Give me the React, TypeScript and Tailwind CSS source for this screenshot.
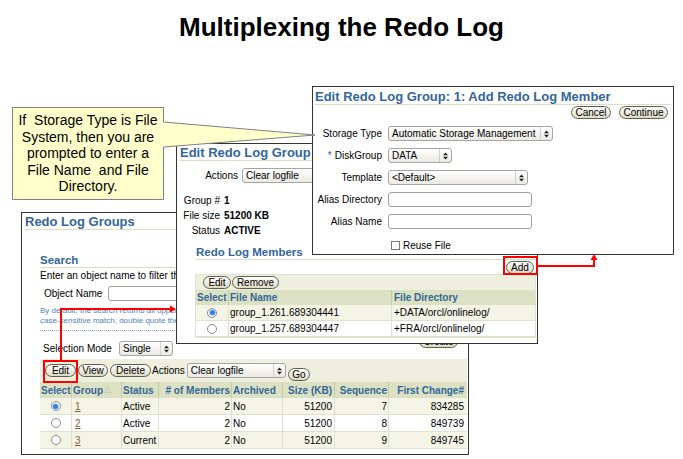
import type { ReactNode } from 'react';

const Btn = ({ children, className = '' }: { children: ReactNode; className?: string }) => (
    <span
        className={`inline-flex h-[13px] items-center justify-center rounded-[7px] border border-[#5e5e4e] bg-linear-to-b from-white to-[#dcd9c3] text-[10px] leading-none text-black ${className}`}
    >
        {children}
    </span>
);

const Sel = ({ children, className = '' }: { children: ReactNode; className?: string }) => (
    <span
        className={`inline-flex h-[15px] items-center rounded-[3px] border border-[#a5a5a5] bg-linear-to-b from-white to-[#eae9e2] text-[10px] leading-none ${className}`}
    >
        <span className="flex-1 overflow-hidden whitespace-nowrap pl-[3px]">{children}</span>
        <span className="flex h-full w-[12px] items-center justify-center border-l border-[#d0d0d0]">
            <svg width="5" height="8" viewBox="0 0 5 8">
                <path d="M0 3.2L2.5 0.5L5 3.2ZM0 4.8L2.5 7.5L5 4.8Z" fill="#222" />
            </svg>
        </span>
    </span>
);

const Field = ({ className = '' }: { className?: string }) => (
    <span className={`inline-block h-[15px] rounded-[3px] border border-[#a0a0a0] bg-white ${className}`} />
);

const Radio = ({ on }: { on?: boolean }) => (
    <span className="inline-flex h-[10px] w-[10px] items-center justify-center rounded-full border border-[#8a8a8a] bg-white">
        {on && <span className="h-[5px] w-[5px] rounded-full bg-[#3d7fd6] shadow-[0_0_0_1px_#b9d4f2]" />}
    </span>
);

const groups = [
    { g: '1', s: 'Active', seq: '7', fc: '834285', on: true },
    { g: '2', s: 'Active', seq: '8', fc: '849739' },
    { g: '3', s: 'Current', seq: '9', fc: '849745' },
];

const cols = 'grid grid-cols-[32px_50px_37px_73px_51px_52px_54px_77px]';

// the part of this window that lies under "Edit Redo Log Group" is hidden
const GroupsWindow = () => (
    <div className="absolute left-[21px] top-[212px] h-[243px] w-[448px] overflow-hidden border border-[#333] bg-white">
        <div className="whitespace-nowrap pl-[3px] pt-px text-[13px] font-bold leading-[15px] text-[#336699]">
            Redo Log Groups
        </div>
        <div className="mx-[3px] h-px bg-[#dedcc4]" />
        <div className="pl-[18px] pr-px text-[10px]">
            <div className="mt-[24px] text-[11.5px] font-bold leading-[13px] text-[#336699]">Search</div>
            <div className="h-px bg-[#dedcc4]" />
            <div className="mt-[2px] whitespace-nowrap leading-[12px]">Enter an object name to filter the</div>
            <div className="mt-[4px] flex items-center">
                <span className="w-[68px] pl-[4px]">Object Name</span>
                <Field className="w-[200px]" />
            </div>
            <div className="mt-[5px] whitespace-nowrap text-[8px] leading-[10px] text-[#4f7fc0]">
                By default, the search returns all upperc
                <br />
                case-sensitive match, double quote the s
            </div>
            <div className="mt-[4px] border-t border-dotted border-[#8aa6cc]" />
            <div className="flex items-start justify-between">
                <div className="mt-[10px] flex items-center">
                    <span className="w-[79px] pl-[3px]">Selection Mode</span>
                    <Sel className="w-[54px]">Single</Sel>
                </div>
                <Btn className="mr-[9px] mt-[4px] w-[39px]">Create</Btn>
            </div>
            <div className="mt-[3px] flex h-[23px] items-center bg-[#efefdf] pl-[5px]">
                <Btn className="w-[31px]">Edit</Btn>
                <Btn className="ml-[2px] w-[30px]">View</Btn>
                <Btn className="ml-[2px] w-[41px]">Delete</Btn>
                <span className="ml-px">Actions</span>
                <Sel className="ml-[2px] w-[99px]">Clear logfile</Sel>
                <Btn className="ml-[2px] mt-[8px] w-[22px]">Go</Btn>
            </div>
            <div className={`${cols} h-[16px] bg-[#dce1c3] font-bold text-[#336699]`}>
                <span className="flex items-center border-r border-[#c4c9a6] pl-px">Select</span>
                <span className="flex items-center border-r border-[#c4c9a6] pl-px">
                    Group<span className="ml-px text-[9px] font-normal text-[#b8b8a8]">△</span>
                </span>
                <span className="flex items-center border-r border-[#c4c9a6] pl-px">Status</span>
                <span className="flex items-center justify-end border-r border-[#c4c9a6] pr-px"># of Members</span>
                <span className="flex items-center border-r border-[#c4c9a6] pl-px">Archived</span>
                <span className="flex items-center justify-end border-r border-[#c4c9a6] pr-[2px]">Size (KB)</span>
                <span className="flex items-center justify-end border-r border-[#c4c9a6] pr-px">Sequence</span>
                <span className="flex items-center justify-end pr-[2px]">First Change#</span>
            </div>
            {groups.map((r, i) => (
                <div
                    key={r.g}
                    className={`${cols} h-[17px] border-b border-[#e2e2cc] ${i % 2 === 0 ? 'bg-[#f4f5e6]' : 'bg-white'}`}
                >
                    <span className="flex items-center justify-center border-r border-[#e2e2cc]">
                        <Radio on={r.on} />
                    </span>
                    <span className="flex items-center border-r border-[#e2e2cc] pl-[3px] text-[#8b5a2b] underline">
                        {r.g}
                    </span>
                    <span className="flex items-center border-r border-[#e2e2cc] pl-px">{r.s}</span>
                    <span className="flex items-center justify-end border-r border-[#e2e2cc] pr-px">2</span>
                    <span className="flex items-center border-r border-[#e2e2cc] pl-px">No</span>
                    <span className="flex items-center justify-end border-r border-[#e2e2cc] pr-[2px]">51200</span>
                    <span className="flex items-center justify-end border-r border-[#e2e2cc] pr-px">{r.seq}</span>
                    <span className="flex items-center justify-end pr-[2px]">{r.fc}</span>
                </div>
            ))}
        </div>
    </div>
);

const mcols = 'grid grid-cols-[33px_163px_1fr]';

const EditGroupWindow = () => (
    <div className="absolute left-[176px] top-[143px] h-[201px] w-[362px] overflow-hidden border border-[#333] bg-white text-[10px]">
        <div className="whitespace-nowrap pl-[3px] pt-px text-[13px] font-bold leading-[15px] text-[#336699]">
            Edit Redo Log Group
        </div>
        <div className="mx-[3px] h-px bg-[#dedcc4]" />
        <div className="mt-[7px] flex items-center">
            <span className="w-[61px] text-right">Actions</span>
            <Sel className="ml-[4px] w-[120px]">Clear logfile</Sel>
        </div>
        <div className="mt-[10px] grid grid-cols-[43px_auto] gap-x-[4px] leading-[15px]">
            <span className="text-right">Group #</span>
            <span className="font-bold">1</span>
            <span className="text-right">File size</span>
            <span className="font-bold">51200 KB</span>
            <span className="text-right">Status</span>
            <span className="font-bold">ACTIVE</span>
        </div>
        <div className="pl-[18px] pr-px">
            <div className="mt-[7px] pl-px text-[11.5px] font-bold leading-[14px] text-[#336699]">Redo Log Members</div>
            <div className="h-px bg-[#dedcc4]" />
            <div className="mt-px flex justify-end pr-[2px]">
                <Btn className="w-[28px]">Add</Btn>
            </div>
            <div className="border border-[#e2e2cc]">
                <div className="flex h-[15px] items-center bg-[#efefdf] pl-[7px]">
                    <Btn className="w-[28px]">Edit</Btn>
                    <Btn className="ml-px w-[47px]">Remove</Btn>
                </div>
                <div className={`${mcols} h-[15px] bg-[#dce1c3] font-bold text-[#336699]`}>
                    <span className="flex items-center border-r border-[#c4c9a6] pl-px">Select</span>
                    <span className="flex items-center border-r border-[#c4c9a6] pl-px">File Name</span>
                    <span className="flex items-center pl-[2px]">File Directory</span>
                </div>
                {[
                    ['group_1.261.689304441', '+DATA/orcl/onlinelog/', true],
                    ['group_1.257.689304447', '+FRA/orcl/onlinelog/', false],
                ].map(([f, d, on], i) => (
                    <div
                        key={f as string}
                        className={`${mcols} h-[16px] border-b border-[#e2e2cc] ${i === 0 ? 'bg-[#f4f5e6]' : 'bg-white'}`}
                    >
                        <span className="flex items-center justify-center border-r border-[#e2e2cc]">
                            <Radio on={on as boolean} />
                        </span>
                        <span className="flex items-center border-r border-[#e2e2cc] pl-px">{f}</span>
                        <span className="flex items-center pl-[2px]">{d}</span>
                    </div>
                ))}
            </div>
        </div>
    </div>
);

const Row = ({ label, children }: { label: ReactNode; children: ReactNode }) => (
    <div className="flex h-[15px] items-center">
        <span className="w-[69px] whitespace-nowrap text-right">{label}</span>
        <span className="ml-[6px] flex">{children}</span>
    </div>
);

const AddMemberWindow = () => (
    <div className="absolute left-[312px] top-[86px] h-[169px] w-[362px] overflow-hidden border border-[#333] bg-white text-[10px]">
        <div className="whitespace-nowrap pl-[2px] pt-[2px] text-[13px] font-bold leading-[15px] text-[#336699]">
            Edit Redo Log Group: 1: Add Redo Log Member
        </div>
        <div className="mx-[2px] h-px bg-[#dedcc4]" />
        <div className="mt-px flex justify-end gap-[8px] pr-[5px]">
            <Btn className="w-[40px]">Cancel</Btn>
            <Btn className="w-[49px]">Continue</Btn>
        </div>
        <div className="mt-[7px] flex flex-col gap-[7px]">
            <Row label="Storage Type">
                <Sel className="w-[165px]">Automatic Storage Management</Sel>
            </Row>
            <Row
                label={
                    <>
                        <span className="mr-[3px] text-[#336699]">*</span>DiskGroup
                    </>
                }
            >
                <Sel className="w-[64px]">DATA</Sel>
            </Row>
            <Row label="Template">
                <Sel className="w-[140px]">&lt;Default&gt;</Sel>
            </Row>
            <Row label="Alias Directory">
                <Field className="w-[144px]" />
            </Row>
            <Row label="Alias Name">
                <Field className="w-[144px]" />
            </Row>
        </div>
        <div className="mt-[9px] flex items-center pl-[78px]">
            <span className="h-[9px] w-[9px] border border-[#777] bg-white" />
            <span className="ml-[3px]">Reuse File</span>
        </div>
    </div>
);

const Overlay = () => (
    <svg className="pointer-events-none absolute left-0 top-0" width="683" height="459" viewBox="0 0 683 459">
        <polygon
            points="12.5,107.5 163.5,107.5 163.5,122 315,135 163.5,147 163.5,199.5 12.5,199.5"
            fill="#ffffcc"
            stroke="#808080"
        />
        <rect x="44" y="361" width="33" height="21" fill="none" stroke="#ff0000" strokeWidth="2" />
        <polyline points="61,360 61,309 171,309" fill="none" stroke="#ff0000" strokeWidth="2" />
        <polygon points="170,305.5 176,309 170,312.5" fill="#ff0000" />
        <rect x="504" y="257" width="33" height="17" fill="none" stroke="#ff0000" strokeWidth="2" />
        <polyline points="537,266 594,266 594,259" fill="none" stroke="#ff0000" strokeWidth="2" />
        <polygon points="590.5,260 594,254 597.5,260" fill="#ff0000" />
    </svg>
);

export default function App() {
    return (
        <div className="relative h-[459px] w-[683px] overflow-hidden bg-white font-['Liberation_Sans',Arial,sans-serif] text-black">
            <h1 className="pt-3 text-center text-[26px] font-bold leading-[30px]">Multiplexing the Redo Log</h1>
            <GroupsWindow />
            <EditGroupWindow />
            <AddMemberWindow />
            <Overlay />
            <div className="absolute left-[13px] top-[108px] flex h-[91px] w-[150px] items-center justify-center whitespace-pre text-center text-[14px] leading-[16.5px]">
                {'If  Storage Type is File\nSystem, then you are\nprompted to enter a\nFile Name  and File\nDirectory.'}
            </div>
        </div>
    );
}
